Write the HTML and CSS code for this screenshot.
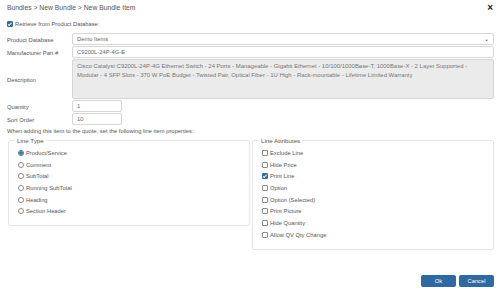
FILE: index.html
```html
<!DOCTYPE html>
<html>
<head>
  <meta charset="UTF-8">
  <title>New Bundle Item</title>
  <link rel="stylesheet" href="styles.css">
</head>
<body>
  <div class="header">
    <span class="title">Bundles &gt; New Bundle &gt; New Bundle Item</span>
    <span class="close">&times;</span>
  </div>

  <label class="retrieve"><input type="checkbox" checked> Retrieve from Product Database:</label>

  <div class="form-grid">
    <label>Product Database</label>
    <div class="select">Demo Items<span class="caret">&#8964;</span></div>

    <label>Manufacturer Part #</label>
    <input type="text" class="field" value="C9200L-24P-4G-E">

    <label>Description</label>
    <div class="textarea">Cisco Catalyst C9200L-24P-4G Ethernet Switch - 24 Ports - Manageable - Gigabit Ethernet - 10/100/1000Base-T, 1000Base-X - 2 Layer Supported - Modular - 4 SFP Slots - 370 W PoE Budget - Twisted Pair, Optical Fiber - 1U High - Rack-mountable - Lifetime Limited Warranty</div>

    <label>Quantity</label>
    <input type="text" class="field short" value="1">

    <label>Sort Order</label>
    <input type="text" class="field short" value="10">
  </div>

  <p class="note">When adding this item to the quote, set the following line item properties:</p>

  <div class="groups">
    <fieldset>
      <legend>Line Type</legend>
      <label class="opt"><input type="radio" name="lt" checked> Product/Service</label>
      <label class="opt"><input type="radio" name="lt"> Comment</label>
      <label class="opt"><input type="radio" name="lt"> SubTotal</label>
      <label class="opt"><input type="radio" name="lt"> Running SubTotal</label>
      <label class="opt"><input type="radio" name="lt"> Heading</label>
      <label class="opt"><input type="radio" name="lt"> Section Header</label>
    </fieldset>
    <fieldset>
      <legend>Line Attributes</legend>
      <label class="opt"><input type="checkbox"> Exclude Line</label>
      <label class="opt"><input type="checkbox"> Hide Price</label>
      <label class="opt"><input type="checkbox" checked> Print Line</label>
      <label class="opt"><input type="checkbox"> Option</label>
      <label class="opt"><input type="checkbox"> Option (Selected)</label>
      <label class="opt"><input type="checkbox"> Print Picture</label>
      <label class="opt"><input type="checkbox"> Hide Quantity</label>
      <label class="opt"><input type="checkbox"> Allow QV Qty Change</label>
    </fieldset>
  </div>

  <div class="buttons">
    <button>Ok</button>
    <button>Cancel</button>
  </div>
</body>
</html>
```

FILE: styles.css
```css
/* Bundle item dialog */
body {
  font-family: "Liberation Sans", Arial, sans-serif;
  font-size: 5.8px;
  color: #555;
  margin: 0;
  padding: 0 6px 0 7px;
  background-color: #fff;
}
.header {
  display: flex;
  justify-content: space-between;
  align-items: center;
  height: 15px;
}
.title {
  font-size: 6.8px;
  color: #555;
}
.close {
  font-size: 10px;
  font-weight: bold;
  color: #222;
  margin-right: 1px;
}
input[type="checkbox"],
input[type="radio"] {
  appearance: none;
  -webkit-appearance: none;
  box-sizing: border-box;
  width: 6px;
  height: 6px;
  margin: 0 2px 0 0;
  border: 1px solid #8a8a8a;
  background-color: #fff;
  flex: none;
  position: relative;
}
input[type="checkbox"] {
  border-radius: 1px;
}
input[type="checkbox"]:checked {
  background-color: #2f6fa3;
  border-color: #2f6fa3;
}
input[type="checkbox"]:checked::after {
  content: "";
  position: absolute;
  left: 1px;
  top: 0;
  width: 1px;
  height: 2.5px;
  border: solid #fff;
  border-width: 0 1px 1px 0;
  transform: rotate(40deg);
}
input[type="radio"] {
  border-radius: 50%;
}
input[type="radio"]:checked {
  border-color: #2f7a9e;
  background: radial-gradient(circle, #2f7a9e 55%, #fff 60%);
}
.retrieve {
  display: flex;
  align-items: center;
  height: 12px;
  margin-top: 3px;
}
.form-grid {
  display: grid;
  grid-template-columns: 65px 1fr;
  row-gap: 1px;
  align-items: center;
  margin-top: 3px;
}
.form-grid label {
  padding-top: 1px;
}
.select,
.field,
.textarea {
  box-sizing: border-box;
  border: 1px solid #d6d6d6;
  border-radius: 2px;
  font-family: inherit;
  font-size: 5.8px;
  color: #666;
  padding: 0 4px;
  background-color: #fff;
  margin: 0;
}
.select {
  height: 12px;
  display: flex;
  justify-content: space-between;
  align-items: center;
}
.caret {
  font-size: 6px;
  color: #333;
  position: relative;
  top: -1px;
}
.field {
  height: 12px;
  width: 100%;
  outline: none;
}
.field.short {
  width: 50px;
}
.textarea {
  height: 40px;
  background-color: #ebebeb;
  padding: 2px 6px 2px 4px;
  font-size: 5.95px;
  line-height: 8.5px;
  color: #777;
}
.note {
  margin: 0;
  height: 12px;
  line-height: 12px;
}
.groups {
  display: flex;
  align-items: flex-start;
  gap: 2px;
  margin: 0 0 0 1px;
  width: 486px;
}
fieldset {
  flex: 1;
  border: 1px solid #e6e6e6;
  border-radius: 2px;
  margin: 0;
  padding: 3px 9px 8px;
}
legend {
  font-size: 6.2px;
  color: #555;
  padding: 0 2px;
  margin-left: -3px;
}
.opt {
  display: flex;
  align-items: center;
  height: 11.7px;
}
.buttons {
  display: flex;
  justify-content: flex-end;
  gap: 3px;
  margin-top: 25px;
}
.buttons button {
  width: 35px;
  height: 12px;
  background-color: #30699f;
  color: #fff;
  border: none;
  border-radius: 2px;
  font-family: inherit;
  font-size: 5.8px;
  padding: 0;
  cursor: pointer;
}
```
